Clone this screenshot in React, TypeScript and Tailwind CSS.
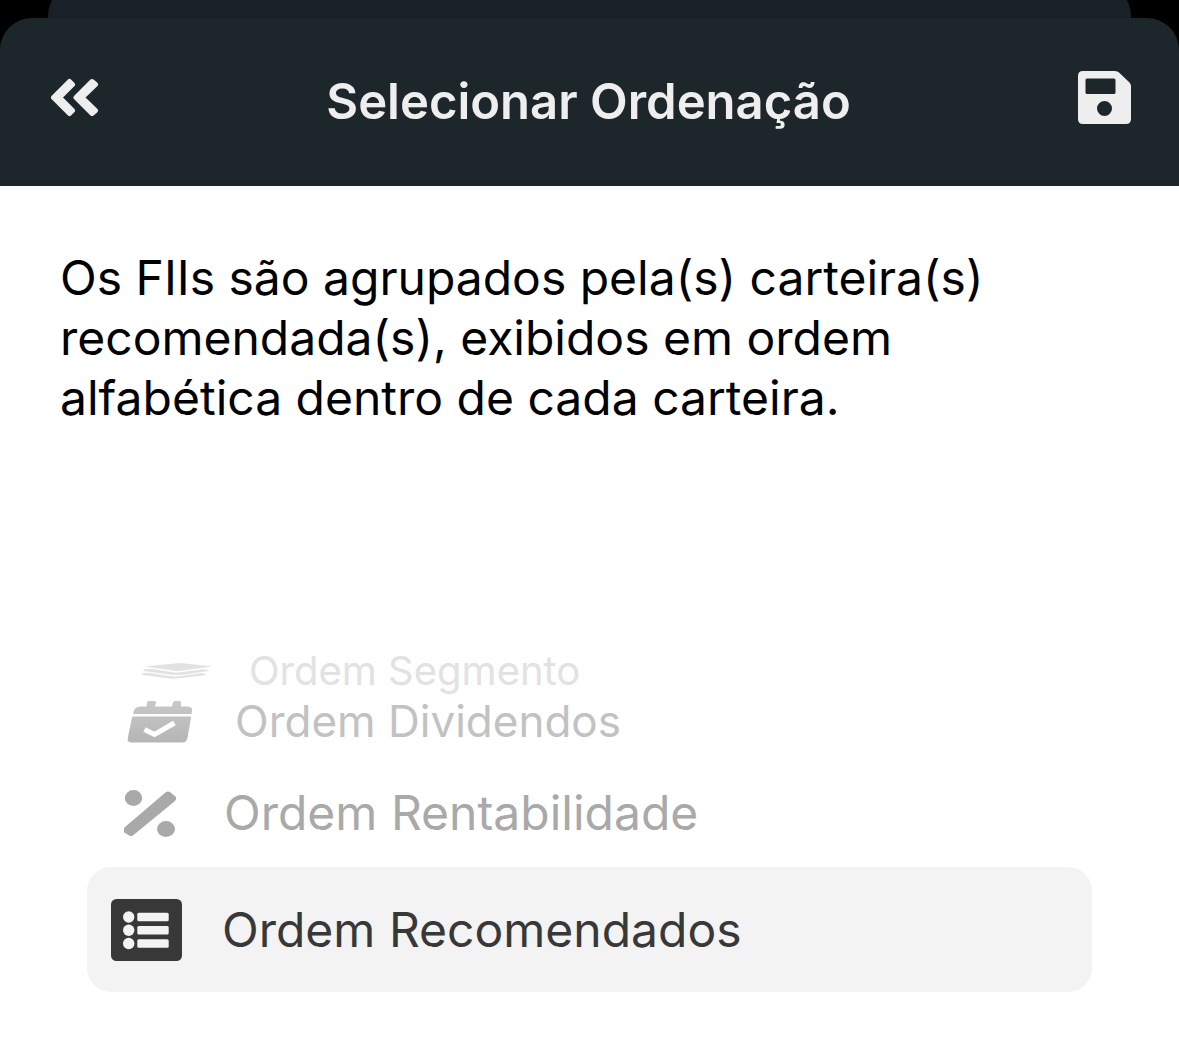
import { useState } from "react";
import type { ReactNode } from "react";

function BackIcon() {
  return (
    <svg viewBox="51 78 48 39" className="h-[39px] w-12" fill="currentColor" stroke="currentColor" strokeWidth="5" strokeLinejoin="round" aria-hidden="true">
      <path d="M53.500 97.500 69.500 81.500 72.500 84.500 59.500 97.500 72.500 110.500 69.500 113.500Z" />
      <path d="M76 97.500 92 81.500 95.500 84.500 82 97.500 95.500 110.500 92 113.500Z" />
    </svg>
  );
}

function SaveIcon() {
  return (
    <svg viewBox="0 0 53 53" className="size-[53px]" fill="currentColor" aria-hidden="true">
      <path
        fillRule="evenodd"
        d="M5 0H37Q39.500 0 41 1.500L51.500 11.500Q53 13 53 15.500V48Q53 53 48 53H5Q0 53 0 48V5Q0 0 5 0ZM9 7.500Q7.500 7.500 7.500 9V21.500Q7.500 23 9 23H36Q37.500 23 37.500 21.500V9Q37.500 7.500 36 7.500ZM26.500 30A7.500 7.500 0 1 0 26.500 45A7.500 7.500 0 1 0 26.500 30Z"
      />
    </svg>
  );
}

function LayersIcon() {
  return (
    <svg viewBox="142 664 70 16" className="h-4 w-[70px]" fill="currentColor" aria-hidden="true">
      <path d="M176 664.500Q181 663.700 186 664.500L210 667Q212 667.500 210 668L184 671.500Q179 672.300 174 671.500L149 668Q147 667.500 149 667Z" />
      <path d="M146 670.300 152 669.700 172 673Q178 674 184 673L204 670.300 209 671Q210.500 671.500 208 672.300L184 675.700Q178 676.500 172 675.700L145 672Q143 671.200 146 670.300Z" />
      <path d="M144 674.300 150 673.700 170 677Q176 677.800 182 677L202 674.300 206 675Q208 675.500 206 676.200L180 679.300Q174 680 168 679.300L144 676Q141 675.200 144 674.300Z" />
    </svg>
  );
}

function CalendarIcon() {
  return (
    <svg viewBox="128 699 66 43" className="h-[43px] w-[66px]" aria-hidden="true">
      <defs>
        <linearGradient id="calendar-fade" x1="0" y1="0" x2="0" y2="1" gradientUnits="objectBoundingBox">
          <stop offset="0" stopColor="#c8c8c8" />
          <stop offset="1" stopColor="#b5b5b5" />
        </linearGradient>
      </defs>
      <path
        fill="url(#calendar-fade)"
        d="M149.500 700H155.500Q157.500 700 157 701.500L156 705.500H173L174 701.500Q174.500 700 176 700H180.500Q182 700 182 701.500L182 705.500H189Q193.500 706 193.200 709L192.500 713H134L135 709.500Q136 706 141 705.500H147.500L148 701.500Q148.500 700 149.500 700ZM134 715.500H191Q192 715.500 192 716.500L188.500 737Q187.500 741.500 183 741.500H133Q128 741.500 128.700 737.500L133 716.500Q133.200 715.500 134 715.500Z"
      />
      <path d="M145.500 728.500 155.500 733.500 175.500 722" fill="none" stroke="#ffffff" strokeWidth="5" />
    </svg>
  );
}

function PercentIcon() {
  return (
    <svg viewBox="125 789 52 47" className="h-[47px] w-[52px]" fill="currentColor" aria-hidden="true">
      <ellipse cx="134.500" cy="797" rx="8.700" ry="7.900" />
      <ellipse cx="167" cy="828" rx="9" ry="7.900" />
      <path d="M128 829 169 794 173.500 797.500 132 831.500Z" stroke="currentColor" strokeWidth="7" strokeLinejoin="round" />
    </svg>
  );
}

function ListIcon() {
  return (
    <svg viewBox="111 899 71 62" className="h-[62px] w-[71px]" aria-hidden="true">
      <rect x="111" y="899" width="71" height="62" rx="5.500" fill="currentColor" />
      <g fill="#f3f3f3">
        <circle cx="128.700" cy="917" r="5.700" />
        <circle cx="128.700" cy="930.300" r="5.700" />
        <circle cx="128.700" cy="943.500" r="5.700" />
        <rect x="137.300" y="912.800" width="31.400" height="8.400" rx="1.500" />
        <rect x="137.300" y="926.100" width="31.400" height="8.400" rx="1.500" />
        <rect x="137.300" y="939.300" width="31.400" height="8.400" rx="1.500" />
      </g>
    </svg>
  );
}

type Option = { id: string; label: string; icon: ReactNode; row: string };

const options: Option[] = [
  { id: "segmento", label: "Ordem Segmento", icon: <LayersIcon />, row: "h-8 gap-[38px] pl-[54px] text-[40px] text-[#e2e2e2]" },
  { id: "dividendos", label: "Ordem Dividendos", icon: <CalendarIcon />, row: "h-[68px] gap-[42px] pl-10 text-[44px] text-[#c2c2c2]" },
  { id: "rentabilidade", label: "Ordem Rentabilidade", icon: <PercentIcon />, row: "h-[112px] gap-12 pt-1 pl-[37px] text-[48px] text-[#a9a9a9]" },
  { id: "recomendados", label: "Ordem Recomendados", icon: <ListIcon />, row: "h-[125px] gap-10 rounded-3xl bg-[#f3f3f3] pl-6 text-[48px] text-[#383838]" },
];

export default function App() {
  const [selected, setSelected] = useState("recomendados");

  return (
    <div className="min-h-screen bg-white font-['Inter',sans-serif]">
      <div className="bg-black">
        <div className="h-[18px] overflow-hidden px-12">
          <div className="-mt-4 h-16 rounded-t-[32px] bg-[#1a2027]" />
        </div>
        <header className="flex h-[168px] items-center justify-between rounded-t-[32px] bg-[#1c262b] px-12 text-[#eeeeee]">
          <button type="button" aria-label="Voltar" className="mb-2.5 pl-[3px]">
            <BackIcon />
          </button>
          <h1 className="text-[49px] leading-[60px] font-semibold">Selecionar Ordenação</h1>
          <button type="button" aria-label="Salvar" className="mb-2.5">
            <SaveIcon />
          </button>
        </header>
      </div>

      <main className="pt-[62px] pb-[52px]">
        <p className="mx-[60px] max-w-[960px] text-[48px] leading-[60px] text-black">
          Os FIIs são agrupados pela(s) carteira(s) recomendada(s), exibidos em ordem alfabética dentro de cada carteira.
        </p>

        <div role="radiogroup" aria-label="Ordenação" className="mx-[87px] mt-[227px]">
          {options.map((option) => (
            <label key={option.id} className={"flex cursor-pointer items-center leading-none " + option.row}>
              <input
                type="radio"
                name="ordenacao"
                value={option.id}
                checked={selected === option.id}
                onChange={() => setSelected(option.id)}
                className="sr-only"
              />
              {option.icon}
              <span>{option.label}</span>
            </label>
          ))}
        </div>
      </main>
    </div>
  );
}
